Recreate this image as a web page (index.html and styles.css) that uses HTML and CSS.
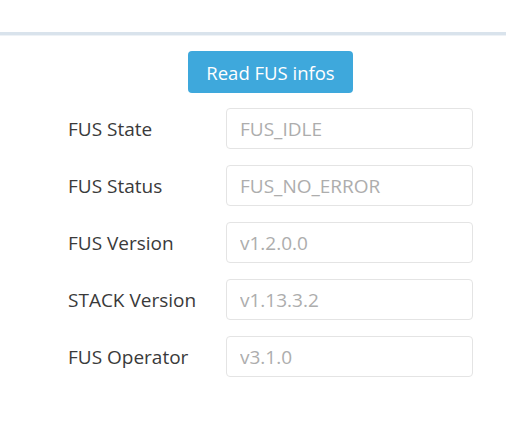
FILE: index.html
```html
<!DOCTYPE html>
<html lang="en">
<head>
    <meta charset="UTF-8">
    <meta name="viewport" content="width=device-width, initial-scale=1.0">
    <title>FUS infos</title>
    <link rel="stylesheet" href="styles.css">
</head>
<body>
    <div class="top-bar"></div>

    <div class="panel">
        <div class="actions">
            <button class="read-btn">Read FUS infos</button>
        </div>

        <!-- FUS info fields -->
        <div class="fields">
            <div class="row">
                <label>FUS State</label>
                <input type="text" value="FUS_IDLE" readonly>
            </div>
            <div class="row">
                <label>FUS Status</label>
                <input type="text" value="FUS_NO_ERROR" readonly>
            </div>
            <div class="row">
                <label>FUS Version</label>
                <input type="text" value="v1.2.0.0" readonly>
            </div>
            <div class="row">
                <label>STACK Version</label>
                <input type="text" value="v1.13.3.2" readonly>
            </div>
            <div class="row">
                <label>FUS Operator</label>
                <input type="text" value="v3.1.0" readonly>
            </div>
        </div>
    </div>
</body>
</html>
```

FILE: styles.css
```css
/* General Styling */
* {
    margin: 0;
    padding: 0;
    box-sizing: border-box;
    font-family: "Open Sans", "Segoe UI", sans-serif;
}

body {
    background: #fff;
    width: 506px;
    height: 437px;
    overflow: hidden;
}

/* Separator line on top */
.top-bar {
    height: 35px;
    border-bottom: 3px solid #d9e3ec;
    box-shadow: 0 1px 0 #eef2f6;
}

/* Panel */
.panel {
    margin: 0 33px 0 68px;
    padding-top: 16px;
}

.actions {
    display: flex;
    justify-content: center;
    margin-bottom: 15px;
}

.read-btn {
    width: 165px;
    height: 42px;
    background: #3ea8dc;
    color: #fff;
    border: none;
    border-radius: 4px;
    font-size: 18.5px;
    cursor: pointer;
}

.read-btn:hover {
    background: #3199cc;
}

/* Fields */
.fields {
    display: flex;
    flex-direction: column;
    gap: 16px;
}

.row {
    display: flex;
    align-items: center;
}

.row label {
    width: 158px;
    font-size: 19px;
    color: #3a3a3a;
}

.row input {
    flex: 1;
    min-width: 0;
    height: 41px;
    padding: 0 13px;
    border: 1px solid #e4e4e4;
    border-radius: 4px;
    font-size: 19px;
    color: #adadad;
    outline: none;
    background: #fff;
}
```
